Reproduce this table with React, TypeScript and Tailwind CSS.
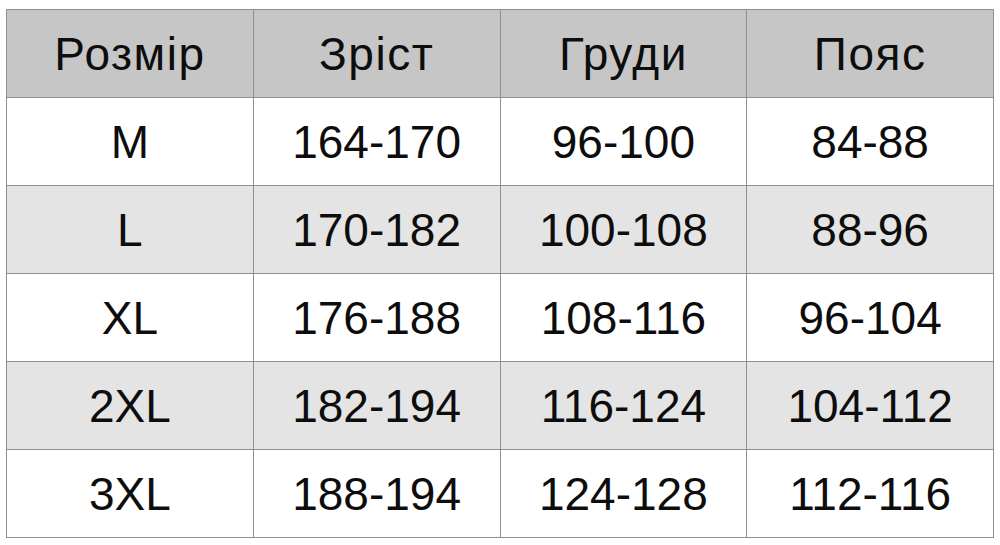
const header = ['Розмір', 'Зріст', 'Груди', 'Пояс'];

const rows = [
  ['M', '164-170', '96-100', '84-88'],
  ['L', '170-182', '100-108', '88-96'],
  ['XL', '176-188', '108-116', '96-104'],
  ['2XL', '182-194', '116-124', '104-112'],
  ['3XL', '188-194', '124-128', '112-116'],
];

export default function App() {
  return (
    <div className="w-[1000px] h-[545px] bg-white pt-[9px] pl-[6px] font-['Liberation_Sans',Arial,sans-serif] text-[#0d0d0d]">
      <table className="w-[988px] table-fixed border-collapse border border-[#8f8f8f] text-[46px] leading-none">
        <thead>
          <tr className="h-[88px] bg-[#c6c6c6]">
            {header.map((h) => (
              <th key={h} className="border border-[#8f8f8f] font-normal text-center align-middle tracking-[1.5px]">
                {h}
              </th>
            ))}
          </tr>
        </thead>
        <tbody>
          {rows.map((r, i) => (
            <tr key={r[0]} className={`h-[88px] ${i % 2 === 1 ? 'bg-[#e4e4e4]' : 'bg-white'}`}>
              {r.map((c, j) => (
                <td key={j} className="border border-[#8f8f8f] text-center align-middle">
                  {c}
                </td>
              ))}
            </tr>
          ))}
        </tbody>
      </table>
    </div>
  );
}
